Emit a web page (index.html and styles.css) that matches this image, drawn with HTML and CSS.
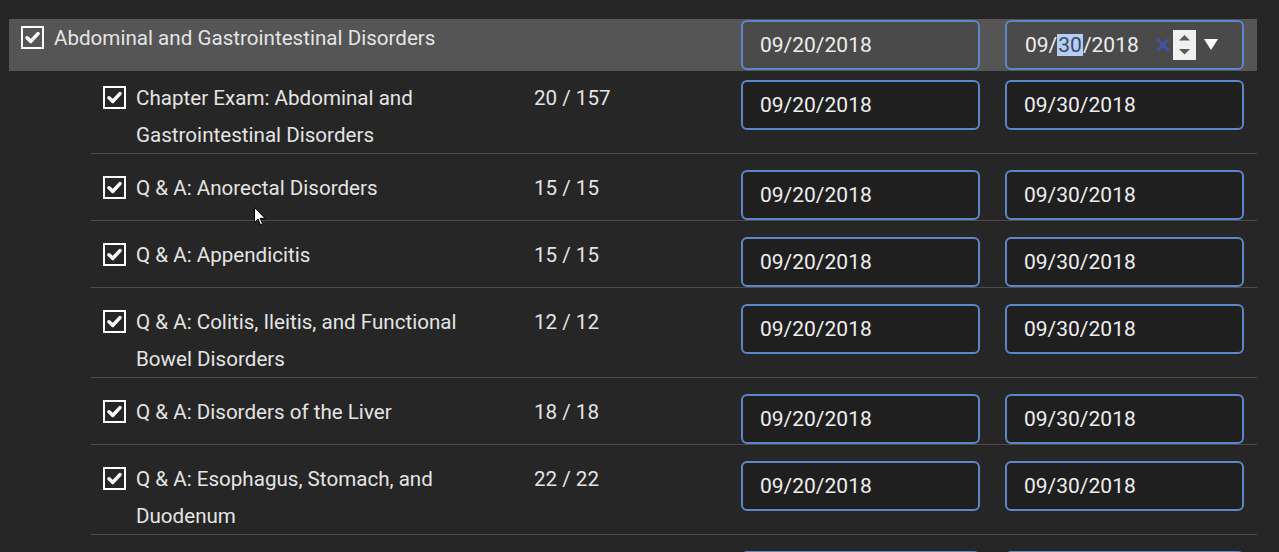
FILE: index.html
```html
<!DOCTYPE html>
<html>
<head>
<meta charset="utf-8">
<link rel="stylesheet" href="styles.css">
</head>
<body>
<div class="tree">
  <div class="group-row">
    <span class="check"><svg viewBox="0 0 23 23" width="23" height="23"><rect x="1" y="1" width="21" height="21" fill="none" stroke="#fff" stroke-width="2"/><path d="M6 11.8 L9.8 15.4 L17 7.6" fill="none" stroke="#fff" stroke-width="3.6" stroke-linecap="round" stroke-linejoin="round"/></svg></span>
    <div class="group-title">Abdominal and Gastrointestinal Disorders</div>
    <div class="date date-group">09/20/2018</div>
    <div class="date date-group date-focus">
      <span class="dtext">09/<span class="sel">30</span>/2018</span>
      <span class="clear"><svg viewBox="0 0 14 14" width="14" height="14"><path d="M2 2 L12 12 M12 2 L2 12" stroke="#3f55a3" stroke-width="3" stroke-linecap="round"/></svg></span>
      <span class="spin"><svg viewBox="0 0 23 30" width="23" height="30"><path d="M6 10.5 L11.5 5 L17 10.5 Z" fill="#5a5a5a"/><path d="M6 19 L17 19 L11.5 24.5 Z" fill="#5a5a5a"/></svg></span>
      <span class="drop"><svg viewBox="0 0 14 11" width="14" height="11"><path d="M0 0 L14 0 L7 11 Z" fill="#fff"/></svg></span>
    </div>
  </div>
  <div class="children">
    <div class="row">
      <span class="check"><svg viewBox="0 0 23 23" width="23" height="23"><rect x="1" y="1" width="21" height="21" fill="none" stroke="#fff" stroke-width="2"/><path d="M6 11.8 L9.8 15.4 L17 7.6" fill="none" stroke="#fff" stroke-width="3.6" stroke-linecap="round" stroke-linejoin="round"/></svg></span>
      <div class="title">Chapter Exam: Abdominal and Gastrointestinal Disorders</div>
      <div class="score">20 / 157</div>
      <div class="date">09/20/2018</div>
      <div class="date">09/30/2018</div>
    </div>
    <div class="row">
      <span class="check"><svg viewBox="0 0 23 23" width="23" height="23"><rect x="1" y="1" width="21" height="21" fill="none" stroke="#fff" stroke-width="2"/><path d="M6 11.8 L9.8 15.4 L17 7.6" fill="none" stroke="#fff" stroke-width="3.6" stroke-linecap="round" stroke-linejoin="round"/></svg></span>
      <div class="title">Q &amp; A: Anorectal Disorders</div>
      <div class="score">15 / 15</div>
      <div class="date">09/20/2018</div>
      <div class="date">09/30/2018</div>
    </div>
    <div class="row">
      <span class="check"><svg viewBox="0 0 23 23" width="23" height="23"><rect x="1" y="1" width="21" height="21" fill="none" stroke="#fff" stroke-width="2"/><path d="M6 11.8 L9.8 15.4 L17 7.6" fill="none" stroke="#fff" stroke-width="3.6" stroke-linecap="round" stroke-linejoin="round"/></svg></span>
      <div class="title">Q &amp; A: Appendicitis</div>
      <div class="score">15 / 15</div>
      <div class="date">09/20/2018</div>
      <div class="date">09/30/2018</div>
    </div>
    <div class="row">
      <span class="check"><svg viewBox="0 0 23 23" width="23" height="23"><rect x="1" y="1" width="21" height="21" fill="none" stroke="#fff" stroke-width="2"/><path d="M6 11.8 L9.8 15.4 L17 7.6" fill="none" stroke="#fff" stroke-width="3.6" stroke-linecap="round" stroke-linejoin="round"/></svg></span>
      <div class="title">Q &amp; A: Colitis, Ileitis, and Functional Bowel Disorders</div>
      <div class="score">12 / 12</div>
      <div class="date">09/20/2018</div>
      <div class="date">09/30/2018</div>
    </div>
    <div class="row">
      <span class="check"><svg viewBox="0 0 23 23" width="23" height="23"><rect x="1" y="1" width="21" height="21" fill="none" stroke="#fff" stroke-width="2"/><path d="M6 11.8 L9.8 15.4 L17 7.6" fill="none" stroke="#fff" stroke-width="3.6" stroke-linecap="round" stroke-linejoin="round"/></svg></span>
      <div class="title">Q &amp; A: Disorders of the Liver</div>
      <div class="score">18 / 18</div>
      <div class="date">09/20/2018</div>
      <div class="date">09/30/2018</div>
    </div>
    <div class="row">
      <span class="check"><svg viewBox="0 0 23 23" width="23" height="23"><rect x="1" y="1" width="21" height="21" fill="none" stroke="#fff" stroke-width="2"/><path d="M6 11.8 L9.8 15.4 L17 7.6" fill="none" stroke="#fff" stroke-width="3.6" stroke-linecap="round" stroke-linejoin="round"/></svg></span>
      <div class="title">Q &amp; A: Esophagus, Stomach, and Duodenum</div>
      <div class="score">22 / 22</div>
      <div class="date">09/20/2018</div>
      <div class="date">09/30/2018</div>
    </div>
    <div class="row row-partial">
      <span class="check check-empty"></span>
      <div class="title"></div>
      <div class="score"></div>
      <div class="date"></div>
      <div class="date"></div>
    </div>
  </div>
</div>
<svg class="cursor" viewBox="0 0 12 19" width="12" height="19"><path d="M0.5 0.5 L0.5 15.5 L4 12 L6.5 17.8 L8.6 16.9 L6.2 11.3 L11 11.3 Z" fill="#fff" stroke="#000" stroke-width="1"/></svg>
</body>
</html>
```
FILE: styles.css
```css
html, body {
  margin: 0;
  background: #262626;
}
body {
  padding: 19px 0 0 9px;
  font-family: Roboto, "Noto Sans", sans-serif;
  font-size: 20.6px;
  color: #e4e4e4;
  overflow: hidden;
  height: 552px;
  box-sizing: border-box;
}
.tree {
  width: 1248px;
}
.group-row {
  display: flex;
  align-items: flex-start;
  background: #555555;
  padding: 1px 13px 1px 12px;
  line-height: 36px;
}
.check {
  flex: 0 0 23px;
  height: 23px;
  margin: 6px 10px 0 0;
  display: block;
}
.check svg { display: block; }
.group-title {
  flex: 1;
}
.date {
  flex: 0 0 239px;
  height: 50px;
  box-sizing: border-box;
  border: 2px solid #5b87c9;
  border-radius: 6px;
  background: #1f1f1f;
  color: #eeeeee;
  padding: 0 0 0 17px;
  line-height: 46px;
  font-size: 21px;
  display: flex;
  align-items: center;
}
.date + .date {
  margin-left: 25px;
}
.date-group {
  background: #4a4a4a;
}
.date-focus {
  padding-left: 18px;
}
.sel {
  background: #b5cef6;
  color: #3c4a64;
  padding: 0 1px;
  display: inline-block;
  line-height: 22px;
}
.clear {
  margin-left: 17px;
  display: block;
  height: 14px;
}
.clear svg, .spin svg, .drop svg { display: block; }
.spin {
  margin-left: 3px;
  background: #f0f0f0;
  display: block;
  width: 23px;
  height: 30px;
}
.drop {
  margin-left: 8px;
  display: block;
  margin-top: -1px;
}
.children {
  margin-left: 82px;
}
.row {
  display: flex;
  align-items: flex-start;
  padding: 16px 13px 0 12px;
  border-bottom: 1px solid #4c4c4c;
  line-height: 36.5px;
}
.row:first-child {
  padding-top: 9px;
}
.row-partial {
  border-bottom: none;
}
.title {
  flex: 0 0 360px;
  margin-right: 38px;
}
.score {
  flex: 0 0 207px;
}
.cursor {
  position: absolute;
  left: 254px;
  top: 207px;
}
```
